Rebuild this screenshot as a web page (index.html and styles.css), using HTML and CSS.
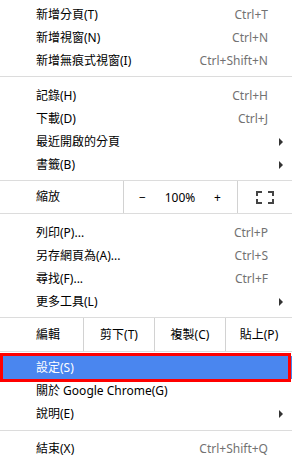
FILE: index.html
```html
<!DOCTYPE html>
<html lang="zh-Hant">
<head>
  <meta charset="UTF-8" />
  <title>Chrome 選單</title>
  <link rel="stylesheet" href="styles.css">
</head>
<body>
  <div class="menu">
    <div class="item"><span>新增分頁(T)</span><span class="key">Ctrl+T</span></div>
    <div class="item"><span>新增視窗(N)</span><span class="key">Ctrl+N</span></div>
    <div class="item"><span>新增無痕式視窗(I)</span><span class="key">Ctrl+Shift+N</span></div>
    <div class="sep"></div>

    <div class="item"><span>記錄(H)</span><span class="key">Ctrl+H</span></div>
    <div class="item"><span>下載(D)</span><span class="key">Ctrl+J</span></div>
    <div class="item"><span>最近開啟的分頁</span><span class="arrow"></span></div>
    <div class="item"><span>書籤(B)</span><span class="arrow"></span></div>

    <!-- 縮放 -->
    <div class="zoom-row">
      <div class="zoom-label">縮放</div>
      <div class="zoom-ctrl"><span>−</span><span>100%</span><span>+</span></div>
      <div class="zoom-full">
        <svg width="18" height="13" viewBox="0 0 18 13">
          <path d="M1 5V1H6M12 1H17V5M17 8V12H12M6 12H1V8" fill="none" stroke="#444" stroke-width="2" />
        </svg>
      </div>
    </div>

    <div class="item"><span>列印(P)...</span><span class="key">Ctrl+P</span></div>
    <div class="item"><span>另存網頁為(A)...</span><span class="key">Ctrl+S</span></div>
    <div class="item"><span>尋找(F)...</span><span class="key">Ctrl+F</span></div>
    <div class="item"><span>更多工具(L)</span><span class="arrow"></span></div>

    <!-- 編輯 -->
    <div class="edit-row">
      <div class="edit-label">編輯</div>
      <div class="edit-btn">剪下(T)</div>
      <div class="edit-btn">複製(C)</div>
      <div class="edit-btn">貼上(P)</div>
    </div>

    <div class="item active"><span>設定(S)</span></div>
    <div class="item"><span>關於 Google Chrome(G)</span></div>
    <div class="item"><span>說明(E)</span><span class="arrow"></span></div>
    <div class="sep last"></div>

    <div class="item"><span>結束(X)</span><span class="key">Ctrl+Shift+Q</span></div>
  </div>
</body>
</html>
```

FILE: styles.css
```css
body {
  margin: 0;
  background: #fff;
  font-family: "Noto Sans", "Noto Sans CJK TC", sans-serif;
  font-size: 12px;
  color: #000;
}

.menu {
  width: 292px;
  padding-top: 3px;
}

/* 一般項目 */
.item {
  position: relative;
  display: flex;
  justify-content: space-between;
  align-items: center;
  height: 23px;
  line-height: 23px;
  padding: 0 9px 0 36px;
}
.item .key {
  color: #727272;
  padding-right: 15px;
}
.arrow {
  width: 0;
  height: 0;
  border-left: 4px solid #333;
  border-top: 4px solid transparent;
  border-bottom: 4px solid transparent;
}

.item.active {
  background: #4a86ef;
  color: #fff;
  margin-top: 4px;
}
.item.active::after {
  content: "";
  position: absolute;
  top: -3px;
  bottom: -3px;
  left: 0;
  right: 1px;
  border: 3px solid #f00;
}

.sep {
  height: 1px;
  background: #dcdcdc;
  margin: 4px 0 7px;
}
.sep.last {
  margin: 5px 0 6px;
}

/* 縮放 */
.zoom-row {
  display: flex;
  height: 32px;
  margin: 4px 0 7px;
  border-top: 1px solid #dcdcdc;
  border-bottom: 1px solid #dcdcdc;
}
.zoom-label {
  width: 123px;
  padding-left: 36px;
  box-sizing: border-box;
  line-height: 32px;
}
.zoom-ctrl {
  width: 114px;
  border-left: 1px solid #d2d2d2;
  display: flex;
  justify-content: space-between;
  align-items: center;
  padding: 0 16px 0 15px;
  box-sizing: border-box;
}
.zoom-full {
  flex: 1;
  border-left: 1px solid #d2d2d2;
  display: flex;
  justify-content: center;
  align-items: center;
}

/* 編輯 */
.edit-row {
  display: flex;
  height: 33px;
  margin-top: 4px;
  border-top: 1px solid #dcdcdc;
  border-bottom: 1px solid #dcdcdc;
  line-height: 33px;
}
.edit-label {
  width: 83px;
  padding-left: 36px;
  box-sizing: border-box;
}
.edit-btn {
  width: 70px;
  border-left: 1px solid #d2d2d2;
  text-align: center;
}
.edit-btn:last-child {
  flex: 1;
}
```
